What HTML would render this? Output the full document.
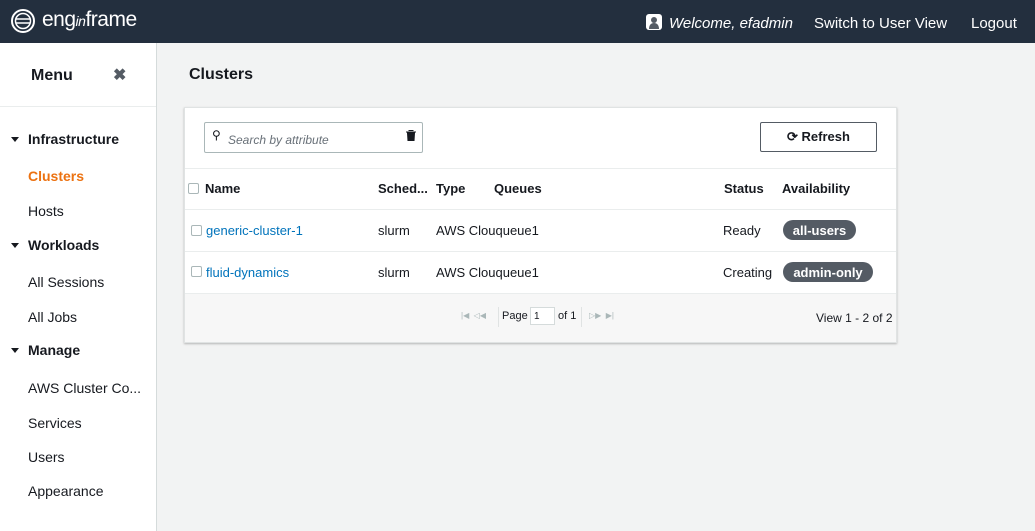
<!DOCTYPE html>
<html><head><meta charset="utf-8"><style>
*{box-sizing:border-box;margin:0;padding:0}
body{width:1035px;height:531px;overflow:hidden;font-family:"Liberation Sans",sans-serif;background:#f2f3f3;color:#16191f;position:relative}
.top{position:absolute;left:0;top:0;width:1035px;height:43px;background:#232f3e;color:#fff}
.top span{position:absolute;top:15px;font-size:15px}
.side{position:absolute;left:0;top:43px;width:157px;height:488px;background:#fff;border-right:1px solid #d5dbdb}
.side .hd{height:64px;border-bottom:1px solid #eaeded;position:relative}
.side .it{position:absolute;font-size:14px}
.grp{font-weight:bold;font-size:14px}
.tri{position:absolute;left:11px;width:0;height:0;border-left:4px solid transparent;border-right:4px solid transparent;border-top:5px solid #16191f}
.t{position:absolute;font-size:13px}
.b{font-weight:bold}
.link{color:#0073bb}
.cb{position:absolute;width:11px;height:11px;border:1px solid #aab7b8;border-radius:2px;background:#fff}
.pill{position:absolute;height:20px;border-radius:10px;background:#545b64;color:#fff;font-weight:bold;font-size:13px;line-height:21px;text-align:center}
.hr{position:absolute;left:185px;width:711px;height:1px;background:#eaeded}
</style></head><body>
<div class="top">
<svg style="position:absolute;left:9px;top:8px" width="30" height="26" viewBox="0 0 30 26"><circle cx="14" cy="13" r="11" fill="none" stroke="#fff" stroke-width="2"/><circle cx="14" cy="13" r="7.5" fill="none" stroke="#fff" stroke-width="1.5"/><path d="M7 11h14M7 15h14" stroke="#fff" stroke-width="1.5"/></svg>
<span style="left:42px;top:8px;font-size:21px;letter-spacing:-0.5px">eng<i style="font-size:14px">in</i>frame</span>
<svg style="position:absolute;left:646px;top:14px" width="16" height="16" viewBox="0 0 16 16"><rect width="16" height="16" rx="3" fill="#fff"/><circle cx="8" cy="6" r="3" fill="#545b64"/><path d="M3 15c0-4 2-6 5-6s5 2 5 6z" fill="#545b64"/></svg>
<span style="left:669px;font-style:italic">Welcome, efadmin</span>
<span style="left:814px">Switch to User View</span>
<span style="left:971px">Logout</span>
</div>
<div class="side">
<div class="hd"><span style="position:absolute;left:31px;top:24px;font-size:16px;font-weight:bold">Menu</span><span style="position:absolute;left:113px;top:22px;font-size:16px;font-weight:bold;color:#545b64">✖</span></div>
<div class="tri" style="top:94px"></div><span class="it grp" style="left:28px;top:88px">Infrastructure</span>
<span class="it b" style="left:28px;top:125px;color:#ec7211">Clusters</span>
<span class="it" style="left:28px;top:160px">Hosts</span>
<div class="tri" style="top:200px"></div><span class="it grp" style="left:28px;top:194px">Workloads</span>
<span class="it" style="left:28px;top:231px">All Sessions</span>
<span class="it" style="left:28px;top:266px">All Jobs</span>
<div class="tri" style="top:305px"></div><span class="it grp" style="left:28px;top:299px">Manage</span>
<span class="it" style="left:28px;top:337px">AWS Cluster Co...</span>
<span class="it" style="left:28px;top:372px">Services</span>
<span class="it" style="left:28px;top:406px">Users</span>
<span class="it" style="left:28px;top:440px">Appearance</span>
</div>
<span style="position:absolute;left:189px;top:66px;font-size:16px;font-weight:bold">Clusters</span>
<div style="position:absolute;left:184px;top:107px;width:713px;height:236px;background:#fff;border:1px solid #e0e3e3;box-shadow:0 1px 2px rgba(0,0,0,.25)"></div>
<div style="position:absolute;left:185px;top:294px;width:711px;height:48px;background:#f7f7f7"></div>
<div style="position:absolute;left:204px;top:122px;width:219px;height:31px;border:1px solid #aab7b8;border-radius:2px;background:#fff"></div>
<span class="t" style="left:212px;top:128px;font-size:12px">⚲</span>
<span class="t" style="left:228px;top:133px;font-size:12px;font-style:italic;color:#687078">Search by attribute</span>
<svg style="position:absolute;left:406px;top:130px" width="10" height="11" viewBox="0 0 10 11"><path d="M0 2h10M3 1V0h4v1M1.5 3h7l-.5 8h-6z" fill="#16191f" stroke="#16191f" stroke-width="1"/></svg>
<div style="position:absolute;left:760px;top:122px;width:117px;height:30px;border:1px solid #545b64;border-radius:2px;background:#fff;text-align:center;line-height:28px;font-weight:bold;font-size:13px">⟳ Refresh</div>
<div class="hr" style="top:168px"></div><div class="hr" style="top:209px"></div><div class="hr" style="top:251px"></div><div class="hr" style="top:293px"></div>
<div class="cb" style="left:188px;top:183px"></div>
<span class="t b" style="left:205px;top:181px">Name</span>
<span class="t b" style="left:378px;top:181px">Sched...</span>
<span class="t b" style="left:436px;top:181px">Type</span>
<span class="t b" style="left:494px;top:181px">Queues</span>
<span class="t b" style="left:724px;top:181px">Status</span>
<span class="t b" style="left:782px;top:181px">Availability</span>
<div class="cb" style="left:191px;top:225px"></div>
<span class="t link" style="left:206px;top:223px">generic-cluster-1</span>
<span class="t" style="left:378px;top:223px">slurm</span>
<span class="t" style="left:436px;top:223px">AWS Clouqueue1</span>
<span class="t" style="left:723px;top:223px">Ready</span>
<div class="pill" style="left:783px;top:220px;width:73px">all-users</div>
<div class="cb" style="left:191px;top:266px"></div>
<span class="t link" style="left:206px;top:265px">fluid-dynamics</span>
<span class="t" style="left:378px;top:265px">slurm</span>
<span class="t" style="left:436px;top:265px">AWS Clouqueue1</span>
<span class="t" style="left:723px;top:265px">Creating</span>
<div class="pill" style="left:783px;top:262px;width:90px">admin-only</div>
<span class="t" style="left:461px;top:311px;font-size:8px;color:#aab7b8">|◀ &nbsp;◁◀</span>
<div style="position:absolute;left:498px;top:307px;width:1px;height:20px;background:#e0e3e3"></div>
<span class="t" style="left:502px;top:310px;font-size:11px">Page</span>
<div style="position:absolute;left:530px;top:307px;width:25px;height:18px;border:1px solid #d5dbdb;background:#fff;font-size:10px;padding:3px 0 0 3px">1</div>
<span class="t" style="left:558px;top:310px;font-size:11px">of 1</span>
<div style="position:absolute;left:581px;top:307px;width:1px;height:20px;background:#e0e3e3"></div>
<span class="t" style="left:589px;top:311px;font-size:8px;color:#aab7b8">▷▶ &nbsp;▶|</span>
<span class="t" style="left:816px;top:311px;font-size:12px">View 1 - 2 of 2</span>
</body></html>
